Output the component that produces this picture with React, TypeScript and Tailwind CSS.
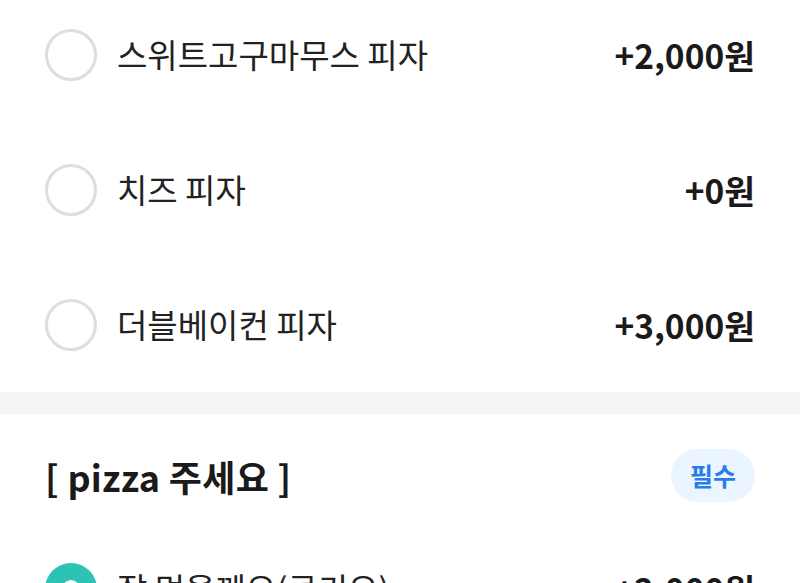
import React from "react";

const rows = [
  { name: "스위트고구마무스 피자", price: "+2,000원" },
  { name: "치즈 피자", price: "+0원" },
  { name: "더블베이컨 피자", price: "+3,000원" },
];

function Row({ name, price, selected }: { name: string; price: string; selected?: boolean }) {
  return (
    <div className="flex h-[135px] items-center justify-between px-[45px]">
      <div className="flex items-center gap-[20px]">
        {selected ? (
          <div className="flex h-[52px] w-[52px] items-center justify-center rounded-full bg-[#2cc3b5]">
            <div className="h-[18px] w-[18px] rounded-full bg-white" />
          </div>
        ) : (
          <div className="h-[52px] w-[52px] rounded-full border-[3px] border-[#dedede] bg-white" />
        )}
        <span className="text-[33px] leading-none text-[#222222]">{name}</span>
      </div>
      <span className="text-[33.5px] font-bold leading-none text-[#1a1a1a]">{price}</span>
    </div>
  );
}

export default function App() {
  return (
    <div
      className="h-[583px] w-[800px] overflow-hidden bg-white"
      style={{ fontFamily: '"Noto Sans CJK KR", "Noto Sans", sans-serif' }}
    >
      <div className="-mt-[13px]">
        {rows.map((r) => (
          <Row key={r.name} name={r.name} price={r.price} />
        ))}
      </div>
      <div className="h-[22px] bg-[#f3f5f6]" />
      <div className="flex items-center justify-between px-[45px] pb-[19px] pt-[35px]">
        <span className="text-[36px] font-bold leading-none tracking-[0.3px] text-[#1a1a1a]">[ pizza 주세요 ]</span>
        <span className="flex h-[53px] w-[84px] items-center justify-center rounded-full bg-[#ebf5ff] text-[25px] font-bold leading-none text-[#2a7de9]">
          필수
        </span>
      </div>
      <Row name="잘 먹을께요(쿠키오)" price="+2,000원" selected />
    </div>
  );
}
